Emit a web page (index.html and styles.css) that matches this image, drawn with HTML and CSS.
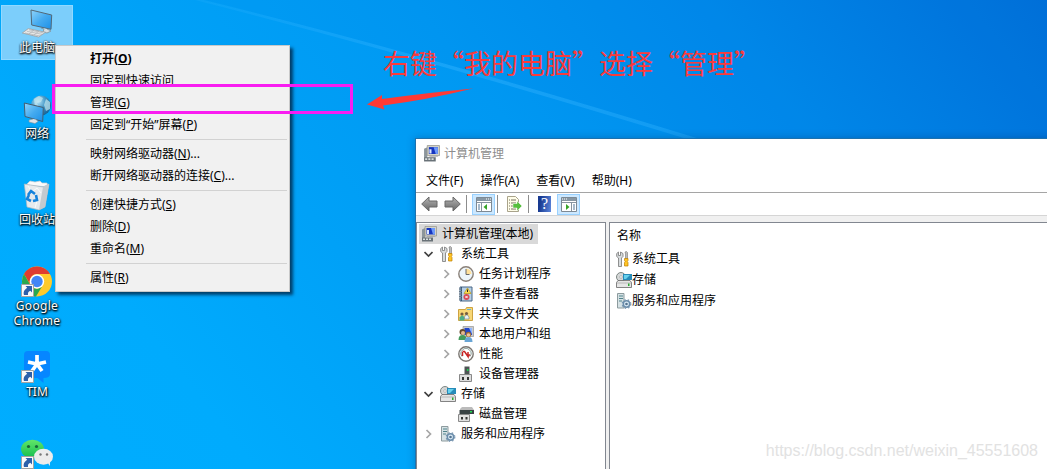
FILE: index.html
```html
<!DOCTYPE html>
<html lang="zh-CN">
<head>
<meta charset="utf-8">
<title>计算机管理</title>
<link rel="stylesheet" href="styles.css">
</head>
<body>
<svg class="defs" width="0" height="0">
  <defs>
    <linearGradient id="screen" x1="0" y1="0" x2="1" y2="1"><stop offset="0" stop-color="#8fd4fb"/><stop offset=".5" stop-color="#45abf0"/><stop offset="1" stop-color="#1c8fe6"/></linearGradient>
    <linearGradient id="metal" x1="0" y1="0" x2="0" y2="1"><stop offset="0" stop-color="#b5b5b5"/><stop offset="1" stop-color="#666"/></linearGradient>
    <linearGradient id="green" x1="0" y1="0" x2="0" y2="1"><stop offset="0" stop-color="#63e668"/><stop offset="1" stop-color="#12bd50"/></linearGradient>
    <radialGradient id="globe" cx=".35" cy=".3" r=".8"><stop offset="0" stop-color="#b9e6fa"/><stop offset=".5" stop-color="#3f94c4"/><stop offset="1" stop-color="#115a8c"/></radialGradient>
    <symbol id="shortcut" viewBox="0 0 13 13"><path d="M.5.5h12v12H.5z" fill="#fafafa" stroke="#a3a3a3"/><path d="M4.500 2H11v6.500L9.300 6.800C7.300 7.500 6.800 8.800 7 11H3C2 8 3.600 5.300 6.200 3.700z" fill="#2c60ab"/></symbol>
    <symbol id="computer" viewBox="0 0 16 16"><path d="M1 3.500 4 2v10H1z" fill="#8c969c"/><path d="M4 .5h11.500v9.500H4z" fill="#d5d5c8" stroke="#92928b" stroke-width=".7"/><path d="M5.500 2h8.500v6.500H5.500z" fill="#1635be"/><path d="m10 2 4 0v6.500h-2z" fill="#6f9afa"/><path d="M6 4h2v4H6z" fill="#dce7ff"/><path d="M1 11.500h11V15.500H1z" fill="#697278"/><path d="M2 12.500h2v1.500H2zm3 0h2v1.500H5zm3 0h2v1.500H8z" fill="#d9dfdf"/><path d="M6 10h8v1H6z" fill="#aaa"/></symbol>
    <symbol id="tools" viewBox="0 0 16 16"><path d="M2.500 1v3.500h2V1l2.500 1.500v3L5.500 7v8.500h-3V7L.7 5.500v-3z" fill="#d7dbdd" stroke="#777" stroke-width=".8"/><path d="m9 1 1.500-.5 1 1V8H9.500V3z" fill="#bbb" stroke="#777" stroke-width=".6"/><path d="M8.500 7.500h3.500v2l-.7 1 .7 1v3.500H8.500v-3.500l.7-1-.7-1z" fill="#ffc425" stroke="#bd8000" stroke-width=".7"/></symbol>
    <symbol id="clock" viewBox="0 0 16 16"><circle cx="8" cy="8" r="7.200" fill="#edf5fa" stroke="#8a8179" stroke-width="1.400"/><path d="M8 8V2.500A5.500 5.500 0 0 1 13.500 8z" fill="#ffe09b"/><path d="M8 3v5.500h3.500" fill="none" stroke="#686868"/></symbol>
    <symbol id="events" viewBox="0 0 16 16"><path d="M2 1h12v14H2z" fill="#b6d0e7" stroke="#486786"/><path d="M3.500 1v14" stroke="#375679"/><path d="M1 3h3M1 5.500h3M1 8h3M1 10.500h3M1 13h3" stroke="#677784"/><path d="m9.500 2 3.500 5.500H6z" fill="#ffd84d" stroke="#b79100" stroke-width=".6"/><path d="M9.500 3.500v2.500" stroke="#222"/><circle cx="8.500" cy="11" r="3" fill="#d94854"/><path d="m7.400 9.900 2.200 2.200m0-2.200-2.200 2.200" stroke="#fff"/></symbol>
    <symbol id="folder" viewBox="0 0 16 16"><path d="M.5 3.500h7l1-2h6v13H.5z" fill="#f8d775" stroke="#cda341"/><path d="M9 3h4v1H9z" fill="#5fb3dd"/><circle cx="4" cy="8" r="1.600" fill="#765d3d"/><circle cx="8.500" cy="7.500" r="1.600" fill="#765d3d"/><path d="M1.500 14.500v-3l2-2h1.500l1.500 2v3z" fill="#4dad87"/><path d="M6.500 13v-2l1-2h2l1.500 2v2z" fill="#e9f3f7" stroke="#567" stroke-width=".5"/></symbol>
    <symbol id="users" viewBox="0 0 16 16"><path d="M5 .500h10.500v10H5z" fill="#ccc" stroke="#888" stroke-width=".6"/><path d="M6.500 2H14v7H6.500z" fill="#2346c8"/><path d="m11 2 3 0v6z" fill="#90b7ff"/><circle cx="4.500" cy="6" r="3" fill="#65492c"/><circle cx="5" cy="7" r="2" fill="#e4b98f"/><path d="M.5 14q0-5 4-5t4 5z" fill="#439b5b"/><circle cx="10.500" cy="8.500" r="2.700" fill="#9b6b38"/><circle cx="10.500" cy="9" r="1.800" fill="#efc59a"/><path d="M6.500 16q0-5 4-5t4 5z" fill="#68a5d5"/></symbol>
    <symbol id="performance" viewBox="0 0 16 16"><circle cx="8" cy="8" r="7.200" fill="#fff" stroke="#7b7772" stroke-width="1.400"/><path d="M4 10.500a5 5 0 1 1 8 0" fill="none" stroke="#87a09b"/><path d="m4.500 5.500 2 0 3.500 5V6m-5.500 0v4m5.500.5 2-2" fill="none" stroke="#c82424" stroke-width="1.500"/></symbol>
    <symbol id="device" viewBox="0 0 16 16"><path d="M6.500.5h5v9h-5z" fill="#4e5454"/><path d="M9 3h1.500v2H9z" fill="#18d64c"/><path d="M1.500 8.500h12v7h-12z" fill="#dedede" stroke="#888"/><path d="M4 11h2v3H4zm5 0h2v3H9z" fill="#353535"/></symbol>
    <symbol id="storage" viewBox="0 0 16 16"><circle cx="5" cy="5" r="4.500" fill="#d5d8d8" stroke="#7b8582"/><circle cx="5" cy="5" r="1.300" fill="#fff" stroke="#888" stroke-width=".5"/><path d="M7 2h9v6H7z" fill="#278bb9"/><path d="m8 3 6 0-4 4H8z" fill="#67d1ed"/><path d="M2 8.500h12l1.500 2v5H.5v-5z" fill="#e5e5e5" stroke="#666" stroke-width=".8"/><path d="M1 11h14.500" stroke="#999" stroke-width=".6"/><path d="M12 11.500h1.500V14H12z" fill="#2baa31"/></symbol>
    <symbol id="disk" viewBox="0 0 16 16"><path d="M2 3 4 1h10l2 3v4H2z" fill="#bbb"/><path d="M1.500 4H16v4H1.500z" fill="#394244"/><path d="M12 5h2v1.500h-2z" fill="#21e052"/><path d="M.5 8.500h11v7H.5z" fill="#e1e1e1" stroke="#888"/><path d="M3 11h2v2.500H3zm4.500 0h2v2.500h-2z" fill="#363636"/></symbol>
    <symbol id="services" viewBox="0 0 16 16"><path d="M1.500.5h6.500v14.500h-6.500z" fill="#d6e2e5" stroke="#8d9b9e"/><path d="M3 3h4M3 5.500h4M3 8h3" stroke="#50838b"/><circle cx="10.500" cy="11" r="3.200" fill="#ddecf6" stroke="#6a8dab" stroke-width="1.500"/><circle cx="10.500" cy="11" r="4.300" fill="none" stroke="#7795af" stroke-width="1.200" stroke-dasharray="1.500 2"/><circle cx="10.500" cy="11" r="1.300" fill="#54738f"/></symbol>
    <symbol id="closed" viewBox="0 0 9 12"><path d="m2.500 2 4 4-4 4" fill="none" stroke="#a6a6a6" stroke-width="1.700"/></symbol>
    <symbol id="open" viewBox="0 0 9 12"><path d="m.5 4 4 4 4-4" fill="none" stroke="#404040" stroke-width="1.700"/></symbol>
    <symbol id="arrow" viewBox="0 0 17 16"><path d="M.7 8 8 1v4h8v6H8v4z" fill="url(#metal)" stroke="#686868"/></symbol>
    <symbol id="panes" viewBox="0 0 16 15"><path d="M.5.5h15v14H.5z" fill="#fff" stroke="#7d8994"/><path d="M1 1h14v3H1z" fill="#8797a4"/><path d="M10 2h1m1 0h1m1 0h1" stroke="#fff"/><path d="M1 5.500h14M5.500 5v9" stroke="#8794a0"/><path d="M2 8h2M2 10h2M2 12h2" stroke="#4e7498"/><path d="M11 7v6L7.500 10z" fill="#36a428"/></symbol>
  </defs>
</svg>
<main class="desktop">
  <svg class="wallpaper" viewBox="0 0 1047 469">
    <defs><linearGradient id="beam" x1="0" x2="1"><stop offset="0" stop-color="#39b4ff" stop-opacity=".15"/><stop offset=".5" stop-color="#39b4ff" stop-opacity=".4"/><stop offset="1" stop-color="#39b4ff" stop-opacity=".3"/></linearGradient></defs>
    <path d="M195 0h9Q420 53 700 139h-13Q420 57 195 0z" fill="url(#beam)"/>
    <path d="M204 0h843v139H700Q420 53 204 0z" fill="#0068d4" fill-opacity=".05"/>
  </svg>

  <nav class="shortcuts">
    <div class="item selected">
      <svg width="36" height="32"><path d="m12 2 20.700 5-.7 14.300L12.700 17z" fill="url(#screen)" stroke="#526878"/><path d="m22 20 3 1-1 3 4 1 4-2-4-2" fill="#d9dfe2" stroke="#788890" stroke-width=".7"/><path d="m3.300 25 6-4.400L26.600 24.300l-7 4.700z" fill="#e8e8e8" stroke="#9a9fa2" stroke-width=".8"/><path d="m6 25 15 3M8 23.300l15 3M10 21.800l14 3M10 26l5-4M15 27l5-4" stroke="#a5aaad" stroke-width=".6"/></svg>
      <span>此电脑</span>
    </div>
    <div class="item">
      <svg width="36" height="32"><circle cx="22" cy="11.500" r="10" fill="url(#globe)"/><path d="m15 5 5-3 4 2-2 4-4 1 2 4-4 0zm12 0 4 3 0 7-4 2-2-6z" fill="#c3e7ef" opacity=".7"/><path d="m5.300 9 19 4.500-.6 14L6 22.500z" fill="url(#screen)" stroke="#465e70"/><path d="m14 25-4 1v2l6 1.500 3-2-2-2" fill="#dce2e5" stroke="#82939c" stroke-width=".6"/></svg>
      <span>网络</span>
    </div>
    <div class="item">
      <svg width="36" height="32"><path d="m7 5 4-4 5 1 5-1 2 2 5 0 1 4z" fill="#fafafa" stroke="#c9cfd3" stroke-width=".7"/><path d="m5.300 4 18.700 3 6-3-4 23-6 3-12-3z" fill="#e6eaed" stroke="#adb8bf" stroke-width=".7"/><path d="m24 7 6-3-4 23-6 3z" fill="#c3cacf"/><path d="m9 6 4 6 5-4 4 5m-3 4-3 11" fill="none" stroke="#fff" stroke-width=".8"/><path d="m9 15 3-4 4 3m1 1 1 5-4 1m-2 0-4-2 2-4" fill="none" stroke="#1583dc" stroke-width="2.600"/></svg>
      <span>回收站</span>
    </div>
    <div class="item">
      <svg width="36" height="32"><circle cx="18" cy="15.500" r="15" fill="#ffca2b"/><path d="M5 8A15 15 0 0 1 31 8H18a7.500 7.500 0 0 0-7 10z" fill="#df3d30"/><path d="M5 8a15 15 0 0 0 12 22.500l6-10a7.500 7.500 0 0 1-12-2z" fill="#28a850"/><circle cx="18" cy="15.500" r="7.200" fill="#fff"/><circle cx="18" cy="15.500" r="5.700" fill="#4286f5"/><use href="#shortcut" x="2" y="18" width="13" height="13"/></svg>
      <span class="latin">Google<br>Chrome</span>
    </div>
    <div class="item">
      <svg width="36" height="32"><path d="M9-1h18q4 0 4 4v19q0 4-6.500 4v5l-6-5H9q-4 0-4-4V3q0-4 4-4z" fill="#0686ff"/><path d="M18 12V3m0 9 9-2m-9 2 5 7m-5-7-5 7m5-7-9-2" stroke="#fff" stroke-width="3.700"/><use href="#shortcut" x="2" y="18" width="13" height="13"/></svg>
      <span>TIM</span>
    </div>
    <div class="item">
      <svg width="36" height="32"><ellipse cx="13.500" cy="11" rx="11.500" ry="9.300" fill="url(#green)"/><circle cx="9.500" cy="8.500" r="1.600" fill="#17663a"/><circle cx="17.500" cy="8.500" r="1.600" fill="#17663a"/><path d="m28 24 3 4v-6z" fill="#e7e7e7"/><ellipse cx="24.500" cy="18.700" rx="9.500" ry="8" fill="#ececec"/><circle cx="21.500" cy="16.500" r="1.200" fill="#777"/><circle cx="28" cy="16.500" r="1.200" fill="#777"/><use href="#shortcut" x="2" y="18" width="13" height="13"/></svg>
    </div>
  </nav>

  <section class="window">
    <header class="titlebar"><svg width="17" height="17"><use href="#computer"/></svg><span>计算机管理</span></header>
    <nav class="menubar"><span>文件(F)</span><span>操作(A)</span><span>查看(V)</span><span>帮助(H)</span></nav>
    <div class="toolbar">
      <svg class="back" width="17" height="16"><use href="#arrow"/></svg>
      <svg class="forward" width="17" height="16"><use href="#arrow"/></svg>
      <i class="divider"></i>
      <span class="toggle"><svg width="16" height="15"><use href="#panes"/></svg></span>
      <i class="divider near"></i>
      <svg class="export" width="17" height="16"><path d="M1.500.5h8l3 3v12h-11z" fill="#fffde9" stroke="#a9a38b"/><path d="M3 4h1m1 0h5M3 7h1m1 0h5M3 10h1m1 0h4M3 13h1m1 0h5" stroke="#75715f"/><path d="M7 7.500h4V5l5 5-5 5v-3H7z" fill="#56bf3d" stroke="#fff" stroke-width=".5"/></svg>
      <i class="divider"></i>
      <span class="help">?</span>
      <span class="toggle"><svg class="flip" width="16" height="15"><use href="#panes"/></svg></span>
    </div>
    <div class="panes">
      <div class="tree">
        <div class="row root"><svg class="icon"><use href="#computer"/></svg><span>计算机管理(本地)</span></div>
        <div class="row"><svg class="chevron"><use href="#open"/></svg><svg class="icon"><use href="#tools"/></svg><span>系统工具</span></div>
        <div class="row child"><svg class="chevron"><use href="#closed"/></svg><svg class="icon"><use href="#clock"/></svg><span>任务计划程序</span></div>
        <div class="row child"><svg class="chevron"><use href="#closed"/></svg><svg class="icon"><use href="#events"/></svg><span>事件查看器</span></div>
        <div class="row child"><svg class="chevron"><use href="#closed"/></svg><svg class="icon"><use href="#folder"/></svg><span>共享文件夹</span></div>
        <div class="row child"><svg class="chevron"><use href="#closed"/></svg><svg class="icon"><use href="#users"/></svg><span>本地用户和组</span></div>
        <div class="row child"><svg class="chevron"><use href="#closed"/></svg><svg class="icon"><use href="#performance"/></svg><span>性能</span></div>
        <div class="row child"><svg class="chevron"></svg><svg class="icon"><use href="#device"/></svg><span>设备管理器</span></div>
        <div class="row"><svg class="chevron"><use href="#open"/></svg><svg class="icon"><use href="#storage"/></svg><span>存储</span></div>
        <div class="row child"><svg class="chevron"></svg><svg class="icon"><use href="#disk"/></svg><span>磁盘管理</span></div>
        <div class="row"><svg class="chevron"><use href="#closed"/></svg><svg class="icon"><use href="#services"/></svg><span>服务和应用程序</span></div>
      </div>
      <div class="list">
        <div class="heading">名称</div>
        <div class="entry"><svg class="icon"><use href="#tools"/></svg><span>系统工具</span></div>
        <div class="entry"><svg class="icon"><use href="#storage"/></svg><span>存储</span></div>
        <div class="entry"><svg class="icon"><use href="#services"/></svg><span>服务和应用程序</span></div>
      </div>
    </div>
  </section>

  <div class="context-menu">
    <div class="option default">打开(<u>O</u>)</div>
    <div class="option">固定到快速访问</div>
    <div class="option">管理(<u>G</u>)</div>
    <div class="option">固定到“开始”屏幕(<u>P</u>)</div>
    <hr>
    <div class="option">映射网络驱动器(<u>N</u>)...</div>
    <div class="option">断开网络驱动器的连接(<u>C</u>)...</div>
    <hr>
    <div class="option">创建快捷方式(<u>S</u>)</div>
    <div class="option">删除(<u>D</u>)</div>
    <div class="option">重命名(<u>M</u>)</div>
    <hr>
    <div class="option">属性(<u>R</u>)</div>
  </div>

  <div class="highlight"></div>
  <p class="annotation">右键“我的电脑”选择“管理”</p>
  <svg class="pointer" width="108" height="26"><path d="m1 17.500 15-9.500 0 4Q60 6 107 1.500 60 13 17 18.500l1.500 4z" fill="#ff3934"/></svg>
  <p class="watermark">https://blog.csdn.net/weixin_45551608</p>
</main>
</body>
</html>
```

FILE: styles.css
```css
* { box-sizing: border-box; }
body { margin: 0; font: 12px/20px "Noto Sans", "Noto Sans CJK SC", sans-serif; color: #000; }
svg { display: block; flex: none; overflow: visible; }
p { margin: 0; }
.defs { position: absolute; }
.desktop { position: relative; width: 1047px; height: 469px; overflow: hidden; background: linear-gradient(52deg, #00adff 0%, #00abfd 18%, #00a1f7 36%, #0098f2 55%, #008aea 75%, #0070d9 100%); }
.wallpaper { position: absolute; inset: 0; width: 1047px; height: 469px; }

.shortcuts { position: absolute; left: 1px; top: 5px; width: 72px; display: grid; grid-auto-rows: 86px; align-items: start; }
.item { height: 55px; padding-top: 3px; display: flex; flex-direction: column; align-items: center; color: #fff; line-height: 15px; text-align: center; text-shadow: 0 1px 2px #000, 1px 1px 2px #000, 0 0 2px rgba(0,0,0,.6); }
.item.selected { background: #7ccefb; box-shadow: inset 0 0 0 1px #91d9ff; }
.latin { letter-spacing: .3px; }

.window { position: absolute; left: 415px; top: 138px; width: 640px; height: 340px; background: #fff; border: 1px solid #1d71ad; box-shadow: 0 0 8px rgba(0,35,90,.3); display: flex; flex-direction: column; }
.titlebar { height: 30px; padding: 0 7px; display: flex; align-items: center; gap: 4px; color: #8d8d8d; }
.titlebar svg { margin-top: -2px; }
.menubar { height: 24px; padding-left: 10px; display: flex; align-items: center; gap: 17px; border-bottom: 1px solid #a5a5a5; }
.toolbar { height: 23px; padding-left: 5px; display: flex; align-items: center; border-bottom: 1px solid #d5d5d5; }
.forward { margin-left: 6px; transform: scaleX(-1); }
.divider { width: 1px; height: 18px; margin: 0 5px; background: #8d8d8d; }
.divider.near { margin: 0 8px 0 2px; }
.toggle { width: 23px; height: 21px; display: grid; place-items: center; background: #cce8ff; border: 1px solid #99d1ff; }
.flip { transform: scaleX(-1); }
.help { width: 13px; height: 16px; margin: 0 6px 0 4px; background: linear-gradient(100deg, #183a91 20%, #5c86dc); color: #fff; font: 16px/16px "Liberation Serif", serif; text-align: center; }
.panes { flex: 1; display: flex; gap: 3px; padding-top: 6px; background: #f0f0f0; }
.tree { width: 190px; border: 1px solid #828790; border-bottom: 0; background: #fff; padding-top: 1px; }
.row { height: 20px; padding-left: 7px; display: flex; align-items: center; }
.row.child { padding-left: 25px; }
.row.root { width: 119px; margin-left: 2px; padding-left: 2px; background: #d9d9d9; gap: 5px; }
.row.root .icon { margin-right: 0; }
.chevron { width: 9px; height: 12px; margin-right: 7px; }
.icon { width: 16px; height: 16px; margin-right: 5px; }
.list { flex: 1; border: 1px solid #828790; border-bottom: 0; background: #fff; padding: 3px 0 0 6px; }
.heading { height: 22px; padding-left: 1px; }
.entry { height: 21px; display: flex; align-items: center; }
.entry .icon { margin-right: 0; }

.context-menu { position: absolute; left: 55px; top: 45px; width: 235px; height: 247px; padding: 2px; background: #f1f1f1; border: 1px solid #c9c9c9; box-shadow: 3px 3px 3px rgba(0,20,45,.7); }
.option { height: 22px; padding-left: 32px; line-height: 22px; white-space: nowrap; }
.option.default { font-weight: bold; }
.option u { text-underline-offset: 1px; }
.context-menu hr { height: 1px; margin: 3px 0 3px 28px; border: 0; background: #d2d2d2; }

.highlight { position: absolute; left: 52px; top: 84px; width: 301px; height: 30px; border: 3px solid #f91df1; }
.annotation { position: absolute; left: 383px; top: 43px; font: 27px/40px "Noto Sans CJK SC", sans-serif; color: #f93b3c; white-space: nowrap; }
.pointer { position: absolute; left: 366px; top: 87px; }
.watermark { position: absolute; right: 9px; bottom: 8px; font: 16px/20px "Liberation Sans", Arial, sans-serif; color: #e2e2e2; }
```
